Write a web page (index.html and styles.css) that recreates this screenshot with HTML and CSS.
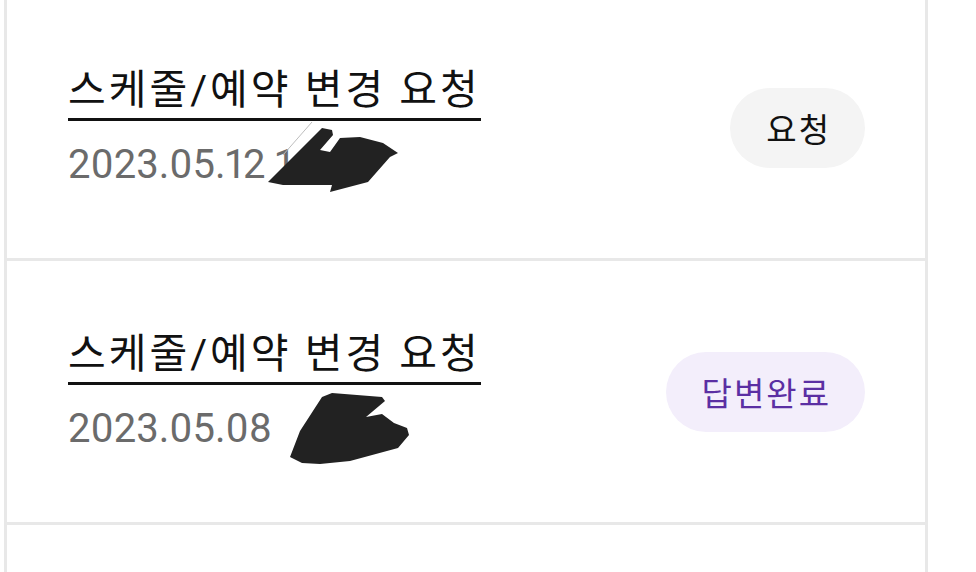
FILE: index.html
```html
<!DOCTYPE html>
<html lang="ko">
<head>
    <meta charset="UTF-8">
    <title>문의 내역</title>
    <link rel="stylesheet" href="styles.css">
</head>
<body>

<div class="inquiry-list">
    <div class="inquiry-row">
        <div class="inquiry-info">
            <div class="inquiry-title"><span>스케줄/예약 변경 요청</span></div>
            <div class="inquiry-date">2023.05.12 1</div>
        </div>
        <span class="status status-request">요청</span>
        <svg class="redact redact-one" width="135" height="75" viewBox="265 118 135 75">
            <line x1="283" y1="155" x2="312" y2="122" stroke="#bdbdbd" stroke-width="1"/>
            <path d="M268 182 L297 153 L322 128 L332 130 L333 135 L320 150 L330 152 L340 138 L360 137 L383 143 L398 153 L390 157 L368 182 L330 192 L332 185 L283 185 Z"/>
        </svg>
    </div>

    <div class="inquiry-row">
        <div class="inquiry-info">
            <div class="inquiry-title"><span>스케줄/예약 변경 요청</span></div>
            <div class="inquiry-date">2023.05.08</div>
        </div>
        <span class="status status-done">답변완료</span>
        <svg class="redact redact-two" width="125" height="75" viewBox="285 390 125 75">
            <path d="M290 456 L300 430 L322 396 L332 392 L382 396 L385 400 L366 416 L382 413 L394 422 L407 427 L409 434 L398 447 L350 460 L320 463 L302 462 Z"/>
        </svg>
    </div>

    <div class="inquiry-row"></div>
</div>

</body>
</html>
```

FILE: styles.css
```css
body {
    margin: 0;
    background-color: #ffffff;
    font-family: Roboto, "Noto Sans CJK KR", sans-serif;
    color: #111111;
}
.inquiry-list {
    width: 918px;
    margin: -3px 0 0 4px;
    border-left: 3px solid #e8e8e8;
    border-right: 3px solid #e8e8e8;
}
.inquiry-row {
    position: relative;
    height: 261px;
    display: flex;
    justify-content: space-between;
    align-items: center;
    padding: 0 60px 0 61px;
    border-bottom: 3px solid #e8e8e8;
}
.inquiry-info {
    display: flex;
    flex-direction: column;
    gap: 24px;
}
.inquiry-title {
    font-size: 41px;
    line-height: 1;
    letter-spacing: 3px;
}
.inquiry-title span {
    display: inline-block;
    padding-bottom: 7px;
    margin-right: -3px;
    border-bottom: 3px solid #111111;
}
.inquiry-date {
    font-size: 40px;
    line-height: 1;
    color: #6b6b6b;
    font-variant-numeric: proportional-nums;
}
.status {
    display: inline-flex;
    align-items: center;
    height: 80px;
    padding: 0 34px 0 36px;
    border-radius: 40px;
    font-size: 33px;
    letter-spacing: 2px;
}
.status-request {
    background-color: #f4f4f4;
    color: #111111;
}
.status-done {
    background-color: #f3eefb;
    color: #5b2fa3;
}
.redact {
    position: absolute;
    fill: #222222;
    filter: blur(0.6px);
}
.redact-one {
    left: 258px;
    top: 121px;
}
.redact-two {
    left: 278px;
    top: 130px;
}
```
